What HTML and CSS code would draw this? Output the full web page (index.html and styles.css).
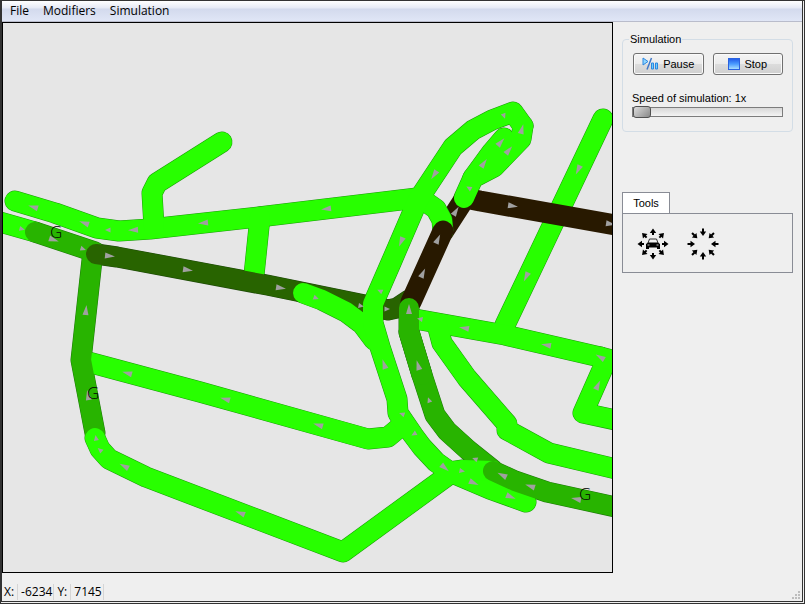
FILE: index.html
```html
<!DOCTYPE html>
<html lang="en">
<head>
<meta charset="utf-8">
<title>Traffic simulation</title>
<link rel="stylesheet" href="styles.css">
</head>
<body>
<div class="window">
  <nav class="menubar">
    <button type="button">File</button>
    <button type="button">Modifiers</button>
    <button type="button">Simulation</button>
  </nav>
  <main class="workspace">
    <section class="map" aria-label="Road map">
      <svg viewBox="3 23 609 549" preserveAspectRatio="xMinYMin slice">
        <defs>
          <path id="arrow" d="M-5-3L5 0L-5 3Z"/>
          <path id="small" d="M-2.500-2.500L3 0L-2.500 2.500Z"/>
          <g id="base">
            <path d="M15 201L55 213L97 228L119 231L150 229L267 216L417 198"/>
            <path d="M0 222L35 232"/>
            <path d="M222 142L157 183L152 193L154 227"/>
            <path d="M260 217L254 275"/>
            <path d="M603 119L505 325"/>
            <path d="M415 319L505 335L600 357L606 361L583 413L616 420"/>
            <path d="M600 357L616 361"/>
            <path d="M438 328L442 343L467 378L507 424L507 430L549 453L616 469"/>
            <path d="M88 362L200 392L368 439L388 437L400 427"/>
          </g>
          <path id="bend" d="M420 199L426 202L436 209L442 220L443 232"/>
          <g id="feeder">
            <path d="M35 232L95 252"/>
            <path d="M92 260L81 360L95 433"/>
            <path d="M409 332L422 375L435 415L447 431L468 450L493 470"/>
          </g>
          <path id="avenue" d="M96 254L117 257L267 285L365 305L388 310L397 308L409 300"/>
          <g id="link">
            <path d="M303 293L322 300L346 312L362 324L374 340"/>
            <path d="M523 126L513 112L492 120L473 130L453 147L418 200L390 265L373 304L373 323L380 347L397 399L398 413L413 435L422 447L436 462L450 472L490 489L526 502"/>
            <path d="M95 438L100 449L109 459L146 477L343 552L450 474"/>
            <path d="M450 472L463 470L493 471"/>
          </g>
          <path id="trunk-out" d="M443 232L465 198L480 201L616 225"/>
          <path id="trunk-in" d="M411 302L443 231"/>
          <g id="loop">
            <path d="M464 198L473 178L494 167L521 139L523 126"/>
            <path d="M473 178L492 152L504 138"/>
            <path d="M486 170L508 144"/>
          </g>
          <g id="ramp">
            <path d="M409 308L409 332L422 375"/>
            <path d="M616 507L547 492L515 481L493 471"/>
          </g>
        </defs>
        <g class="edge free"><use href="#base"/><use href="#link"/><use href="#loop"/></g>
        <g class="edge light"><use href="#feeder"/><use href="#ramp"/></g>
        <g class="edge dense"><use href="#avenue"/></g>
        <g class="road free"><use href="#base"/></g>
        <g class="road light"><use href="#feeder"/></g>
        <g class="road dense"><use href="#avenue"/></g>
        <g class="road jam"><use href="#trunk-out"/></g>
        <g class="edge free flat"><use href="#bend"/></g>
        <g class="road free"><use href="#bend"/></g>
        <g class="road jam"><use href="#trunk-in"/></g>
        <g class="road free"><use href="#link"/><use href="#loop"/></g>
        <g class="road light"><use href="#ramp"/></g>
        <g class="arrows">
          <use href="#arrow" transform="translate(33 207) rotate(197)"/>
          <use href="#arrow" transform="translate(84 223) rotate(199)"/>
          <use href="#arrow" transform="translate(133 230) rotate(177)"/>
          <use href="#arrow" transform="translate(203 223) rotate(174)"/>
          <use href="#arrow" transform="translate(326 209) rotate(173)"/>
          <use href="#small" transform="translate(108 230) rotate(180)"/>
          <use href="#small" transform="translate(22 229) rotate(15)"/>
          <use href="#arrow" transform="translate(54 240) rotate(18)"/>
          <use href="#small" transform="translate(83 249) rotate(18)"/>
          <use href="#arrow" transform="translate(110 256) rotate(6)"/>
          <use href="#arrow" transform="translate(188 270) rotate(9)"/>
          <use href="#arrow" transform="translate(281 288) rotate(9)"/>
          <use href="#small" transform="translate(316 298) rotate(22)"/>
          <use href="#small" transform="translate(361 306) rotate(10)"/>
          <use href="#small" transform="translate(387 309)"/>
          <use href="#arrow" transform="translate(86 310) rotate(-84)"/>
          <use href="#arrow" transform="translate(88 395) rotate(-100)"/>
          <use href="#small" transform="translate(96 438) rotate(-100)"/>
          <use href="#small" transform="translate(100 450) rotate(220)"/>
          <use href="#arrow" transform="translate(124 466) rotate(208)"/>
          <use href="#arrow" transform="translate(240 513) rotate(201)"/>
          <use href="#arrow" transform="translate(127 373) rotate(195)"/>
          <use href="#arrow" transform="translate(225 399) rotate(195)"/>
          <use href="#arrow" transform="translate(318 425) rotate(196)"/>
          <use href="#arrow" transform="translate(434 175) rotate(124)"/>
          <use href="#arrow" transform="translate(401 242) rotate(113)"/>
          <use href="#small" transform="translate(380 291) rotate(205)"/>
          <use href="#small" transform="translate(504 116) rotate(70)"/>
          <use href="#arrow" transform="translate(438 239) rotate(-65)"/>
          <use href="#arrow" transform="translate(423 273) rotate(-65)"/>
          <use href="#arrow" transform="translate(456 211) rotate(-58)"/>
          <use href="#arrow" transform="translate(513 206) rotate(9)"/>
          <use href="#arrow" transform="translate(611 224) rotate(9)"/>
          <use href="#small" transform="translate(469 188) rotate(210)"/>
          <use href="#arrow" transform="translate(484 163) rotate(-55)"/>
          <use href="#arrow" transform="translate(501 142) rotate(-48)"/>
          <use href="#arrow" transform="translate(509 150) rotate(-50)"/>
          <use href="#arrow" transform="translate(522 129) rotate(-75)"/>
          <use href="#arrow" transform="translate(578 170) rotate(116)"/>
          <use href="#arrow" transform="translate(526 277) rotate(116)"/>
          <use href="#small" transform="translate(420 319) rotate(190)"/>
          <use href="#arrow" transform="translate(464 328) rotate(190)"/>
          <use href="#arrow" transform="translate(546 345) rotate(190)"/>
          <use href="#arrow" transform="translate(600 357) rotate(210)"/>
          <use href="#arrow" transform="translate(598 385) rotate(-64)"/>
          <use href="#arrow" transform="translate(409 309) rotate(-90)"/>
          <use href="#arrow" transform="translate(418 365) rotate(-106)"/>
          <use href="#small" transform="translate(429 400) rotate(-110)"/>
          <use href="#arrow" transform="translate(384 364) rotate(-108)"/>
          <use href="#small" transform="translate(402 414) rotate(200)"/>
          <use href="#small" transform="translate(414 434) rotate(150)"/>
          <use href="#arrow" transform="translate(445 468) rotate(40)"/>
          <use href="#small" transform="translate(462 471) rotate(10)"/>
          <use href="#arrow" transform="translate(474 483) rotate(24)"/>
          <use href="#arrow" transform="translate(511 497) rotate(22)"/>
          <use href="#small" transform="translate(475 459) rotate(200)"/>
          <use href="#arrow" transform="translate(502 475) rotate(206)"/>
          <use href="#arrow" transform="translate(530 486) rotate(198)"/>
          <use href="#arrow" transform="translate(576 499) rotate(192)"/>
        </g>
        <g class="marks"><text x="50" y="238">G</text><text x="87" y="399">G</text><text x="579" y="500">G</text></g>
      </svg>
    </section>
    <aside class="side">
      <fieldset class="group">
        <legend>Simulation</legend>
        <div class="buttons">
          <button type="button" class="action">
            <svg width="17" height="14" viewBox="0 0 17 14"><path d="M1 1v7l5-3.500z" fill="#8fd6ff" stroke="#2c86e0"/><path d="M9.500 1L5 12.500" stroke="#3f78c8" stroke-width="1.500"/><path d="M9.500 6h2v6h-2zM13.500 6h2v6h-2z" fill="#6fd0ff" stroke="#2c86e0"/></svg>
            Pause
          </button>
          <button type="button" class="action">
            <svg width="12" height="12" viewBox="0 0 12 12"><defs><linearGradient id="sq" x1="0" y1="0" x2="0" y2="1"><stop offset="0" stop-color="#2058e8"/><stop offset=".5" stop-color="#4b9cff"/><stop offset="1" stop-color="#b0e4ff"/></linearGradient></defs><rect x=".5" y=".5" width="11" height="11" fill="url(#sq)" stroke="#2a62e0"/></svg>
            Stop
          </button>
        </div>
        <label for="speed">Speed of simulation: 1x</label>
        <input id="speed" type="range" min="1" max="20" value="1">
      </fieldset>
      <section class="tools">
        <button type="button" class="tab">Tools</button>
        <div class="panel">
          <button type="button" class="tool" aria-label="Spawn cars">
            <svg width="32" height="32" viewBox="-16 -16 32 32">
              <defs><g id="ray"><path d="M0-9V-12" stroke="#000" stroke-width="2"/><path d="M-3.200-11H3.200L0-15.500Z"/></g></defs>
              <use href="#ray"/><use href="#ray" transform="rotate(45)"/><use href="#ray" transform="rotate(90)"/><use href="#ray" transform="rotate(135)"/><use href="#ray" transform="rotate(180)"/><use href="#ray" transform="rotate(225)"/><use href="#ray" transform="rotate(270)"/><use href="#ray" transform="rotate(315)"/>
              <path d="M-5-1L-3.500-5H3.500L5-1" fill="#efefef" stroke="#333"/><path d="M-7 0L-5-1.500H5L7 0V5H4V3.500H-4V5H-7Z"/><path d="M-5.500 1h2M3.500 1h2" stroke="#bbb"/>
            </svg>
          </button>
          <button type="button" class="tool" aria-label="Remove cars">
            <svg width="32" height="32" viewBox="-16 -16 32 32">
              <defs><g id="inray"><path d="M0-15.500V-12" stroke="#000" stroke-width="2"/><path d="M-3.200-12.500H3.200L0-8Z"/></g></defs>
              <use href="#inray"/><use href="#inray" transform="rotate(45)"/><use href="#inray" transform="rotate(90)"/><use href="#inray" transform="rotate(135)"/><use href="#inray" transform="rotate(180)"/><use href="#inray" transform="rotate(225)"/><use href="#inray" transform="rotate(270)"/><use href="#inray" transform="rotate(315)"/>
            </svg>
          </button>
        </div>
      </section>
    </aside>
  </main>
  <footer class="status">
    <span class="name">X:</span><span class="value">-6234</span><span class="name">Y:</span><span class="value">7145</span>
    <svg class="grip" width="9" height="9" viewBox="0 0 9 9"><path d="M6 0h2v2h-2zM3 3h2v2h-2zM6 3h2v2h-2zM0 6h2v2h-2zM3 6h2v2h-2zM6 6h2v2h-2z"/></svg>
  </footer>
</div>
</body>
</html>
```
FILE: styles.css
```css
* { box-sizing: border-box; }
body {
  margin: 0;
  background: #4a4a4a;
  color: #000;
  font: 12px/16px "Open Sans", "Noto Sans", sans-serif;
}
button { padding: 0; border: 0; background: none; color: inherit; font: inherit; }
.window {
  display: flex;
  flex-direction: column;
  height: 100vh;
  border: solid #333;
  border-width: 1px 3px 3px 2px;
  border-style: solid double double solid;
  background: #efefef;
}
.menubar {
  display: flex;
  gap: 14px;
  height: 21px;
  padding: 2px 8px;
  border-bottom: 1px solid #b9bccb;
  background: linear-gradient(#fff, #e6eaf5 35%, #d3daed 40%, #e0e6f6);
}
.workspace { display: flex; flex: 1; min-height: 0; }
.map { flex: 1; min-width: 0; border: 1px solid #000; background: #e6e6e6; }
.map svg { display: block; width: 100%; height: 100%; }
.road, .edge { fill: none; stroke-linecap: round; stroke-linejoin: round; stroke-width: 20px; }
.edge { stroke-width: 21px; }
.edge.flat { stroke-linecap: butt; }
.road.free { stroke: #28ff00; }
.road.light { stroke: #28b400; }
.road.dense { stroke: #286400; }
.road.jam { stroke: #281900; stroke-width: 21px; }
.edge.free { stroke: #1a9a08; }
.edge.light { stroke: #1d7808; }
.edge.dense { stroke: #1d4808; }
.arrows { fill: #a0a0a0; }
.marks { font: 300 17px "Open Sans", sans-serif; }
.side {
  width: 189px;
  padding: 10px 9px 0;
  font: 11px/14px "Liberation Sans", sans-serif;
}
.group {
  min-width: 0;
  margin: 0;
  padding: 7px 9px 13px;
  border: 1px solid #d3dde6;
  border-radius: 4px;
}
.group legend { padding: 0 1px; margin-left: -3px; }
.buttons { display: flex; gap: 9px; margin-bottom: 16px; padding-left: 1px; }
.action {
  display: flex;
  flex: 1;
  align-items: center;
  justify-content: center;
  gap: 4px;
  height: 22px;
  border: 1px solid #707070;
  border-radius: 3px;
  background: linear-gradient(#f4f4f4, #ebebeb 50%, #dcdcdc 52%, #cfcfcf);
  box-shadow: inset 0 0 0 1px #fafafa;
}
.group label { display: block; }
#speed {
  appearance: none;
  display: block;
  width: 100%;
  height: 12px;
  margin: 1px 0 0;
  background: none;
}
#speed::-webkit-slider-runnable-track {
  height: 10px;
  border: 1px solid #7c7c7c;
  background: linear-gradient(#d8d8d8, #f4f4f4);
}
#speed::-webkit-slider-thumb {
  appearance: none;
  width: 18px;
  height: 12px;
  margin-top: -2px;
  border: 1px solid #505050;
  border-radius: 3px;
  background: linear-gradient(135deg, #ddd, #888);
}
.tools { margin-top: 60px; }
.tab {
  display: block;
  width: 48px;
  height: 21px;
  border: 1px solid #898c95;
  border-bottom: 0;
  background: #fff;
}
.panel {
  display: flex;
  gap: 18px;
  height: 60px;
  padding: 14px;
  border: 1px solid #898c95;
}
.tool { width: 32px; height: 32px; }
.tool svg, .grip { display: block; }
.status { display: flex; height: 28px; padding: 11px 1px 1px; }
.status span { height: 16px; border-right: 1px solid #d5d5d5; }
.name { padding: 0 3px 0 1px; }
.value { padding: 0 1px 0 3px; }
.value + .name { padding-left: 3px; }
.grip { align-self: flex-end; margin-left: auto; fill: #bdbdbd; }
```
